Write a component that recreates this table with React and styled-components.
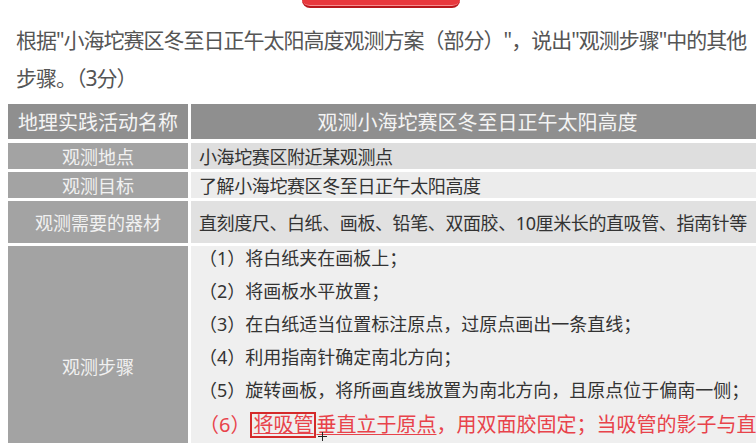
import styled, { createGlobalStyle } from "styled-components";

const GlobalStyle = createGlobalStyle`
  html, body {
    margin: 0;
    padding: 0;
    background: #ffffff;
    overflow: hidden;
  }
  body {
    width: 756px;
    height: 443px;
    font-family: "Noto Sans", "Noto Sans CJK SC", sans-serif;
  }
`;

const info = [
  { label: "观测地点", value: "小海坨赛区附近某观测点", tone: "#dedede", height: 26 },
  { label: "观测目标", value: "了解小海坨赛区冬至日正午太阳高度", tone: "#ececec", height: 26 },
  {
    label: "观测需要的器材",
    value: "直刻度尺、白纸、画板、铅笔、双面胶、10厘米长的直吸管、指南针等",
    tone: "#e1e1e1",
    height: 42,
  },
];

const steps = [
  "（1）将白纸夹在画板上；",
  "（2）将画板水平放置；",
  "（3）在白纸适当位置标注原点，过原点画出一条直线；",
  "（4）利用指南针确定南北方向；",
  "（5）旋转画板，将所画直线放置为南北方向，且原点位于偏南一侧；",
];

function App() {
  return (
    <Page>
      <GlobalStyle />
      <Banner />
      <Question>
        根据"小海坨赛区冬至日正午太阳高度观测方案（部分）"，说出"观测步骤"中的其他步骤。（3分）
      </Question>
      <Table>
        <HeadCell $wide={false}>地理实践活动名称</HeadCell>
        <HeadCell $wide>观测小海坨赛区冬至日正午太阳高度</HeadCell>
        {info.map((row) => (
          <Row key={row.label} $height={row.height}>
            <LabelCell>{row.label}</LabelCell>
            <ValueCell $tone={row.tone}>{row.value}</ValueCell>
          </Row>
        ))}
        <Row $height={240}>
          <LabelCell>观测步骤</LabelCell>
          <StepsCell>
            <StepList>
              {steps.map((s) => (
                <Step key={s}>{s}</Step>
              ))}
              <RedStep>
                （6）<Boxed>将吸管</Boxed>
                <Underlined>垂直立于原点</Underlined>，用双面胶固定；当吸管的影子与直
                <Cursor>
                  <svg width="9" height="9" viewBox="0 0 9 9">
                    <path d="M4.5 0v9M0 4.5h9" stroke="#222" strokeWidth="1" />
                  </svg>
                </Cursor>
              </RedStep>
            </StepList>
          </StepsCell>
        </Row>
      </Table>
    </Page>
  );
}

export default App;

const Page = styled.div`
  width: 756px;
  height: 443px;
  overflow: hidden;
`;

const Banner = styled.div`
  width: 158px;
  height: 6px;
  margin-left: 302px;
  background: #e8383d;
  border-bottom: 2px solid #b8161c;
  border-radius: 0 0 8px 8px;
  box-shadow: inset 0 -3px 0 -2px rgba(255, 200, 200, 0.6);
`;

const Question = styled.p`
  margin: 13px 0 0 16px;
  width: 738px;
  font-size: 21px;
  letter-spacing: -1px;
  line-height: 38px;
  color: #555555;
`;

const Table = styled.div`
  margin: 7px 0 0 8px;
  width: 754px;
  display: grid;
  grid-template-columns: 180px 1fr;
  column-gap: 3px;
  row-gap: 3px;
  background: #ffffff;
`;

const HeadCell = styled.div`
  height: 35px;
  margin-bottom: 1px;
  display: flex;
  align-items: center;
  justify-content: center;
  background: #8f8f8f;
  color: #f4f4f4;
  font-size: 20px;
  padding-left: ${(p) => (p.$wide ? "2px" : "0")};
`;

const Row = styled.div`
  display: contents;
  & > div {
    min-height: ${(p) => p.$height}px;
  }
`;

const LabelCell = styled.div`
  display: flex;
  align-items: center;
  justify-content: center;
  background: #a3a3a3;
  color: #f1f1f1;
  font-size: 18px;
`;

const ValueCell = styled.div`
  display: flex;
  align-items: center;
  padding-left: 8px;
  background: ${(p) => p.$tone};
  color: #333333;
  font-size: 18px;
  letter-spacing: -0.4px;
  white-space: nowrap;
  overflow: hidden;
`;

const StepsCell = styled.div`
  background: #efefef;
  padding-left: 8px;
  overflow: hidden;
`;

const StepList = styled.div`
  margin-top: -4px;
  display: flex;
  flex-direction: column;
`;

const Step = styled.div`
  font-size: 18px;
  line-height: 33px;
  color: #333333;
  white-space: nowrap;
`;

const RedStep = styled.div`
  position: relative;
  font-size: 20px;
  line-height: 35px;
  color: #e8434b;
  white-space: nowrap;
`;

const Boxed = styled.span`
  border: 2px solid #d42a2a;
  padding: 0 1px;
  line-height: 22px;
  display: inline-block;
  text-decoration: underline;
  text-decoration-thickness: 1px;
`;

const Underlined = styled.span`
  text-decoration: underline;
  text-decoration-thickness: 1px;
  text-underline-offset: 2px;
`;

const Cursor = styled.span`
  position: absolute;
  left: 119px;
  top: 25px;
  line-height: 0;
`;
